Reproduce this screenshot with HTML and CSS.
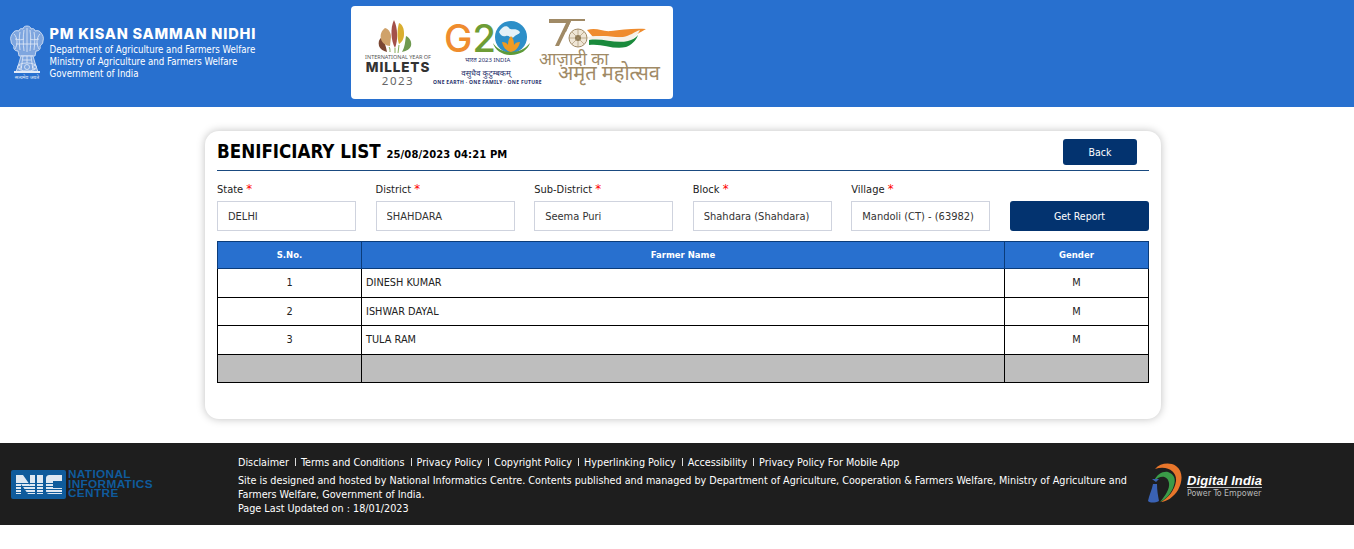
FILE: index.html
```html
<!DOCTYPE html>
<html lang="en">
<head>
<meta charset="utf-8">
<title>PM Kisan Samman Nidhi</title>
<link rel="stylesheet" href="styles.css">
</head>
<body>
<header class="site-header">
  <div class="brand">
    <svg class="emblem" viewBox="0 0 34 55" aria-hidden="true">
      <g fill="none" stroke="#e3ebf7" stroke-width=".8">
        <path d="M17 1c-2 0-4 1-4 3-2-1-4 0-4 2-3-1-5 0-6 2-2 2-3 5-2 8 0 3 2 4 3 5-1 3 1 5 4 5l1 5h16l1-5c3 0 5-2 4-5 1-1 3-2 3-5 1-3 0-6-2-8-1-2-3-3-6-2 0-2-2-3-4-2 0-2-2-3-4-3z" fill="#7fa6df"/>
        <path d="M4 9c2 2 3 5 3 8s-1 5-2 7M30 9c-2 2-3 5-3 8s1 5 2 7M10 7c-1 5-1 11 0 18M24 7c1 5 1 11 0 18M14 5c-1 6-1 14 0 21M20 5c1 6 1 14 0 21M17 3v24M5 14c4 1 7 1 9 0M29 14c-4 1-7 1-9 0M6 19h22"/>
        <path d="M11 31l-2 7-3 9h22l-3-9-2-7z" fill="#7fa6df"/>
        <path d="M13 31l-2 14M21 31l2 14M17 31v7M13 35h8"/>
        <ellipse cx="17" cy="42" rx="9.500" ry="4"/>
        <circle cx="17" cy="42" r="2.500"/>
        <path d="M9 40l3 2-3 2M25 40l-3 2 3 2"/>
      </g>
      <path d="M4 46h26v2H4z" fill="#e3ebf7"/>
      <text class="emblem-motto" x="17" y="54" text-anchor="middle">सत्यमेव जयते</text>
    </svg>
    <div class="brand-text">
      <h1 class="brand-title">PM KISAN SAMMAN NIDHI</h1>
      <p class="brand-line">Department of Agriculture and Farmers Welfare</p>
      <p class="brand-line">Ministry of Agriculture and Farmers Welfare</p>
      <p class="brand-line">Government of India</p>
    </div>
  </div>
  <div class="logo-panel">
    <svg class="logos" viewBox="0 0 322 93" aria-hidden="true">
      <path d="M36 46c-4-1-7-3-8-6-1-4 0-7 3-9 2 4 4 9 5 15z" fill="#7a4632"/>
      <path d="M39 40c-4 0-8-3-9-7s0-8 4-11c4 1 6 5 6 9z" fill="#cfa26a"/>
      <path d="M44 42c-4-7-5-20-1-28 4 8 4 21 1 28z" fill="#a3504a"/>
      <path d="M48 38c-2-6-2-14 0-21 4 2 5 6 5 11s-2 8-5 10z" fill="#d9ae2f"/>
      <path d="M51 46c3-5 3-10 4-16 4 2 6 6 5 10-1 3-4 5-9 6z" fill="#6f9a50"/>
      <path d="M38 41c1 1 1 3 1 5M44 42v5M48 39c0 3-1 5-1 8" fill="none" stroke="#86ad58"/>
      <text class="t-year" x="47" y="53" text-anchor="middle">INTERNATIONAL YEAR OF</text>
      <text class="t-millets" x="47" y="66" text-anchor="middle">MILLETS</text>
      <text class="t-2023" x="47" y="79" text-anchor="middle">2023</text>

      <text class="t-g2" x="93" y="46"><tspan class="t-g">G</tspan><tspan class="t-two">2</tspan></text>
      <circle cx="160" cy="31" r="16" fill="#2d8fc8"/>
      <path d="M148 26c3-6 8-7 10-4s7-1 11 4c-1 3-4 2-6 5-3 2-5-2-8-1s-5 0-7-4z" fill="#e4f1f7"/>
      <path d="M160 46c-5-1-8-5-9-10 3 0 5 1 6 3 0-4 1-7 3-9 2 2 3 5 3 9 1-2 3-3 6-3-1 5-4 9-9 10z" fill="#ef9b23"/>
      <path d="M142 37c4 6 10 9 18 9s14-3 19-9c-2 7-10 12-19 12s-16-5-18-12z" fill="#5e9a3a"/>
      <text class="t-india" x="114" y="56">भारत 2023 INDIA</text>
      <text class="t-vasu" x="135" y="70" text-anchor="middle">वसुधैव कुटुम्बकम्</text>
      <text class="t-one" x="136.500" y="78" text-anchor="middle">ONE EARTH · ONE FAMILY · ONE FUTURE</text>

      <path d="M198 13h22v2l-12 25h-4l11-23h-17z" fill="#a08a66"/>
      <path d="M218 13h16v2h-14l-5 11h-2z" fill="#a08a66"/>
      <path d="M236 24c10-3 15 2 24 1 10-1 22-3 35-2-6 3-10 7-17 8-12 2-22-3-36 0z" fill="#ef8c2e"/>
      <path d="M236 31c14-3 24 2 36 0 7-1 11-5 17-7-2 4-6 9-11 11-13 3-24-3-39-1z" fill="#f6f2ea"/>
      <path d="M238 34c15-2 26 4 39 1 4-1 8-3 10-6-2 6-7 10-12 12-13 3-24-4-37-2z" fill="#1a8a3c"/>
      <circle cx="227" cy="32" r="9" fill="#efe6d6" stroke="#a08a66"/>
      <circle cx="227" cy="32" r="3" fill="#8a7550"/>
      <path d="M218 32h18M227 23v18M221 26l12 12M233 26l-12 12" stroke="#a08a66" stroke-width=".6"/>
      <text class="t-azadi" x="188" y="59">आज़ादी का</text>
      <text class="t-amrit" x="207" y="74">अमृत महोत्सव</text>
    </svg>
  </div>
</header>

<main class="page">
  <section class="card">
    <div class="card-head">
      <h2 class="card-title">BENIFICIARY LIST <span class="stamp">25/08/2023 04:21 PM</span></h2>
      <button class="btn btn-back" type="button">Back</button>
    </div>
    <form class="filters">
      <div class="field"><label class="field-label">State <span class="req">*</span></label><input class="field-input" value="DELHI" readonly></div>
      <div class="field"><label class="field-label">District <span class="req">*</span></label><input class="field-input" value="SHAHDARA" readonly></div>
      <div class="field"><label class="field-label">Sub-District <span class="req">*</span></label><input class="field-input" value="Seema Puri" readonly></div>
      <div class="field"><label class="field-label">Block <span class="req">*</span></label><input class="field-input" value="Shahdara (Shahdara)" readonly></div>
      <div class="field"><label class="field-label">Village <span class="req">*</span></label><input class="field-input" value="Mandoli (CT) - (63982)" readonly></div>
      <div class="field field-action"><button class="btn btn-report" type="button">Get Report</button></div>
    </form>
    <table class="grid">
      <colgroup><col class="col-sn"><col><col class="col-gender"></colgroup>
      <thead><tr><th>S.No.</th><th>Farmer Name</th><th>Gender</th></tr></thead>
      <tbody>
        <tr><td class="c">1</td><td>DINESH KUMAR</td><td class="c">M</td></tr>
        <tr><td class="c">2</td><td>ISHWAR DAYAL</td><td class="c">M</td></tr>
        <tr><td class="c">3</td><td>TULA RAM</td><td class="c">M</td></tr>
        <tr class="row-total"><td></td><td></td><td></td></tr>
      </tbody>
    </table>
  </section>
</main>

<footer class="site-footer">
  <div class="nic">
    <svg class="nic-mark" viewBox="0 0 55 29" aria-hidden="true">
      <rect width="55" height="29" rx="2" fill="#0f5b9c"/>
      <g fill="#dfe8f2">
        <path d="M5 5h7l7 10V5h5v19h-7l-7-10v10H5z"/>
        <path d="M26 5h6v19h-6z"/>
        <path d="M35 9c0-3 1-4 4-4h12v6H42v7h9v6H39c-3 0-4-1-4-4z"/>
      </g>
      <g fill="#0f5b9c">
        <path d="M0 13h55v1H0zM0 16h55v1H0zM0 19h55v1H0zM0 22h55v1H0z"/>
      </g>
    </svg>
    <div class="nic-name">NATIONAL<br>INFORMATICS<br>CENTRE</div>
  </div>
  <div class="foot-text">
    <nav class="foot-links">
      <a>Disclaimer</a><a>Terms and Conditions</a><a>Privacy Policy</a><a>Copyright Policy</a><a>Hyperlinking Policy</a><a>Accessibility</a><a>Privacy Policy For Mobile App</a>
    </nav>
    <p class="foot-line">Site is designed and hosted by National Informatics Centre. Contents published and managed by Department of Agriculture, Cooperation &amp; Farmers Welfare, Ministry of Agriculture and Farmers Welfare, Government of India.</p>
    <p class="foot-line">Page Last Updated on : 18/01/2023</p>
  </div>
  <div class="di">
    <svg class="di-mark" viewBox="0 0 34 40" aria-hidden="true">
      <path d="M7 6C12 0 22-1 28 3c7 5 7 15 2 24-4 7-12 12-17 12 7-4 14-12 15-21C29 9 20 2 7 6z" fill="#e8762b"/>
      <path d="M6 18c3-7 9-10 14-9 6 2 8 7 6 13-2 8-8 14-14 17 5-6 10-13 9-19-1-7-8-9-15-2z" fill="#3a9b48"/>
      <path d="M5 21h4c0 6 1 12 2 17-4 2-9 2-11 0 1-6 4-11 5-17z" fill="#3a62b4"/>
      <path d="M4 16h7l-3 3z" fill="#3a62b4"/>
    </svg>
    <div class="di-text"><span class="di-name">Digital India</span><span class="di-tag">Power To Empower</span></div>
  </div>
</footer>
</body>
</html>
```
FILE: styles.css
```css
* { box-sizing: border-box; }
html, body { margin: 0; padding: 0; }
body {
  background: #fff;
  color: #222;
  font-family: "DejaVu Sans", "Noto Sans CJK SC", sans-serif;
  font-stretch: condensed;
  font-size: 10.500px;
}
p, h1, h2 { margin: 0; }

.site-header {
  height: 107px;
  background: #2870cf;
  display: flex;
  align-items: flex-start;
}
.brand {
  width: 351px;
  display: flex;
  align-items: flex-start;
  padding: 25px 0 0 10px;
  color: #fff;
}
.emblem { width: 34px; height: 55px; flex: none; }
.emblem-motto { font-size: 5px; fill: #e3ebf7; font-family: "Noto Sans", sans-serif; font-stretch: normal; }
.brand-text { margin-left: 5.500px; }
.brand-title {
  font-family: "Inter", "Noto Sans", sans-serif;
  font-stretch: normal;
  font-size: 14.500px;
  font-weight: 800;
  line-height: 17px;
  letter-spacing: .8px;
  margin-bottom: 2px;
}
.brand-line { font-size: 9.650px; line-height: 12px; }

.logo-panel {
  width: 322px;
  height: 93px;
  margin-top: 6px;
  background: #fff;
  border-radius: 4px;
}
.logos { display: block; width: 322px; height: 93px; font-family: "Noto Sans", "DejaVu Sans", sans-serif; font-stretch: normal; }
.t-year { font-size: 5.500px; fill: #555; }
.t-millets { font-size: 13.500px; font-weight: 800; fill: #333; letter-spacing: .9px; font-family: "Inter", sans-serif; }
.t-2023 { font-size: 11.500px; fill: #666; letter-spacing: 1.500px; }
.t-g2 { font-size: 38px; font-family: "Inter", sans-serif; font-weight: 500; }
.t-g { fill: #ef8c2e; }
.t-two { fill: #6e9c35; }
.t-india { font-size: 6px; fill: #27306b; }
.t-vasu { font-size: 8px; fill: #27306b; }
.t-one { font-size: 5px; font-weight: 700; fill: #27306b; letter-spacing: .3px; }
.t-azadi { font-size: 17px; fill: #a08a66; }
.t-amrit { font-size: 20px; fill: #a08a66; }

.page { padding: 24px 193px 24px 205px; }
.card {
  height: 288px;
  background: #fff;
  border-radius: 14px;
  box-shadow: 0 0 8px rgba(0, 0, 0, .25);
  padding: 8px 12px 0;
}
.card-head {
  height: 32px;
  display: flex;
  justify-content: space-between;
  align-items: flex-start;
  border-bottom: 1px solid #1a4a80;
}
.card-title {
  font-family: "DejaVu Sans", sans-serif;
  font-stretch: condensed;
  font-size: 18.600px;
  font-weight: 700;
  color: #000;
  line-height: 26px;
}
.stamp {
  font-size: 10px;
  font-stretch: normal;
  letter-spacing: .1px;
}
.btn {
  border: 0;
  border-radius: 3px;
  background: #03336f;
  color: #fff;
  font: inherit;
  font-stretch: condensed;
  cursor: pointer;
}
.btn-back { width: 74px; height: 26px; margin-right: 12px; }
.filters {
  display: grid;
  grid-template-columns: repeat(6, 1fr);
  column-gap: 19.500px;
  margin-top: 11px;
}
.field-label { display: block; height: 19px; line-height: 15px; font-size: 11px; color: #222; }
.req { color: #f00; font-size: 13px; line-height: 10px; }
.field-input {
  display: block;
  width: 100%;
  height: 30px;
  border: 1px solid #cfd3de;
  padding: 0 10px;
  font: inherit;
  font-stretch: condensed;
  font-size: 11px;
  color: #333;
  background: #fff;
  outline: 0;
}
.field-action { display: flex; align-items: flex-end; }
.btn-report { width: 100%; height: 30px; }

.grid {
  width: 100%;
  margin-top: 10px;
  border-collapse: collapse;
  table-layout: fixed;
  font-family: "DejaVu Sans", sans-serif;
  font-stretch: normal;
  font-size: 9.750px;
}
.col-sn { width: 144px; }
.col-gender { width: 144px; }
.grid th {
  height: 27px;
  padding: 0;
  background: #2870cf;
  color: #fff;
  border: 1px solid #0b3c7a;
  font-size: 8.500px;
  font-weight: 700;
}
.grid td {
  height: 28.500px;
  border: 1px solid #000;
  padding: 0 4px;
  color: #222;
}
.grid td.c { text-align: center; }
.row-total td { background: #bebebe; }

.site-footer {
  height: 82px;
  background: #1e1e1e;
  color: #fff;
  display: flex;
  align-items: flex-start;
  font-size: 10.720px;
}
.nic {
  width: 238px;
  flex: none;
  display: flex;
  padding: 27px 0 0 11px;
}
.nic-mark { width: 55px; height: 29px; flex: none; }
.nic-name {
  margin-left: 2px;
  font-family: "Liberation Sans", sans-serif;
  font-stretch: normal;
  font-weight: 700;
  font-size: 11.800px;
  line-height: 9.500px;
  letter-spacing: .35px;
  color: #0f5b9c;
}
.foot-text { width: 900px; flex: none; padding-top: 12px; }
.foot-links { display: flex; height: 15px; line-height: 15px; margin-bottom: 4px; }
.foot-links a + a { margin-left: 6px; padding-left: 6px; position: relative; }
.foot-links a + a::before {
  content: "";
  position: absolute;
  left: 0;
  top: 3px;
  width: 1px;
  height: 8px;
  background: #ddd;
}
.foot-line { line-height: 14px; }
.di { display: flex; align-items: flex-start; margin-left: 10px; padding-top: 20px; }
.di-mark { width: 34px; height: 40px; flex: none; }
.di-text { display: flex; flex-direction: column; margin: 11px 0 0 5px; }
.di-name {
  font-family: "Liberation Sans", sans-serif;
  font-stretch: normal;
  font-style: italic;
  font-weight: 700;
  font-size: 13px;
  line-height: 13px;
  letter-spacing: .1px;
  border-bottom: 1px solid #bbb;
}
.di-tag { font-size: 8.800px; line-height: 11px; color: #bbb; }
```
